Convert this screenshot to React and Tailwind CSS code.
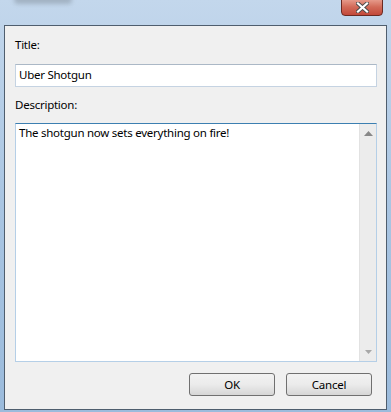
import React from 'react';

export default function App() {
  const font = { fontFamily: '"Segoe UI", "Noto Sans", "Open Sans", sans-serif' };

  return (
    <div
      className="relative w-[391px] h-[412px] overflow-hidden bg-gradient-to-b from-[#c3d7ec] via-[#a9c5e2] to-[#9bbbdc] pt-[25px] px-[4px] pb-[2px]"
      style={font}
    >
      {/* blurred window title */}
      <div className="absolute left-[14px] top-[-4px] w-[58px] h-[8px] rounded bg-[#8c9aa8] opacity-60 blur-[2px]" />

      {/* close button */}
      <div className="absolute left-[341px] top-[-2px] w-[42px] h-[18px] rounded-b-[4px] border border-[#6b2a22] bg-gradient-to-b from-[#e8a091] via-[#d26a58] to-[#c2483a] flex items-center justify-center">
        <svg width="13" height="11" viewBox="0 0 13 11">
          <path d="M2 1.5 L11 9.5 M11 1.5 L2 9.5" stroke="#4a4a4a" strokeWidth="4" strokeLinecap="square" />
          <path d="M2 1.5 L11 9.5 M11 1.5 L2 9.5" stroke="#ffffff" strokeWidth="2.2" strokeLinecap="square" />
        </svg>
      </div>

      {/* client area */}
      <div className="h-full border border-[#4f5e6e] bg-[#f0f0f0] px-[10px] pt-[11px] text-[11.5px] tracking-[-0.25px] text-black">
        <div className="h-[16px] leading-[16px]">Title:</div>
        <div className="mt-[11px] h-[23px] w-[362px] border border-[#c5d3e2] border-t-[#abb8c6] bg-white px-[3px] leading-[20px]">
          Uber Shotgun
        </div>
        <div className="mt-[10px] h-[16px] leading-[16px]">Description:</div>
        <div className="mt-[10px] flex h-[239px] w-[362px] border border-[#b5cfe7] border-t-[#3c7fb1] bg-white">
          <div className="flex-1 px-[3px] pt-[1px] leading-[16px]">
            The shotgun now sets everything on fire!
          </div>
          <div className="flex w-[17px] flex-col items-center justify-between bg-[#ececec] border-l border-[#e2e2e2] py-[7px]">
            <svg width="9" height="5" viewBox="0 0 9 5">
              <path d="M0 5 L4.5 0 L9 5 Z" fill="#888" />
            </svg>
            <svg width="7" height="4" viewBox="0 0 7 4">
              <path d="M0 0 L7 0 L3.5 4 Z" fill="#a8a8a8" />
            </svg>
          </div>
        </div>

        <div className="mt-[11px] flex justify-end gap-[11px] pr-[4px]">
          <button className="h-[23px] w-[86px] rounded-[3px] border border-[#707070] bg-gradient-to-b from-[#f2f2f2] via-[#ebebeb] to-[#d6d6d6] text-[11.5px]">
            OK
          </button>
          <button className="h-[23px] w-[86px] rounded-[3px] border border-[#707070] bg-gradient-to-b from-[#f2f2f2] via-[#ebebeb] to-[#d6d6d6] text-[11.5px]">
            Cancel
          </button>
        </div>
      </div>
    </div>
  );
}
